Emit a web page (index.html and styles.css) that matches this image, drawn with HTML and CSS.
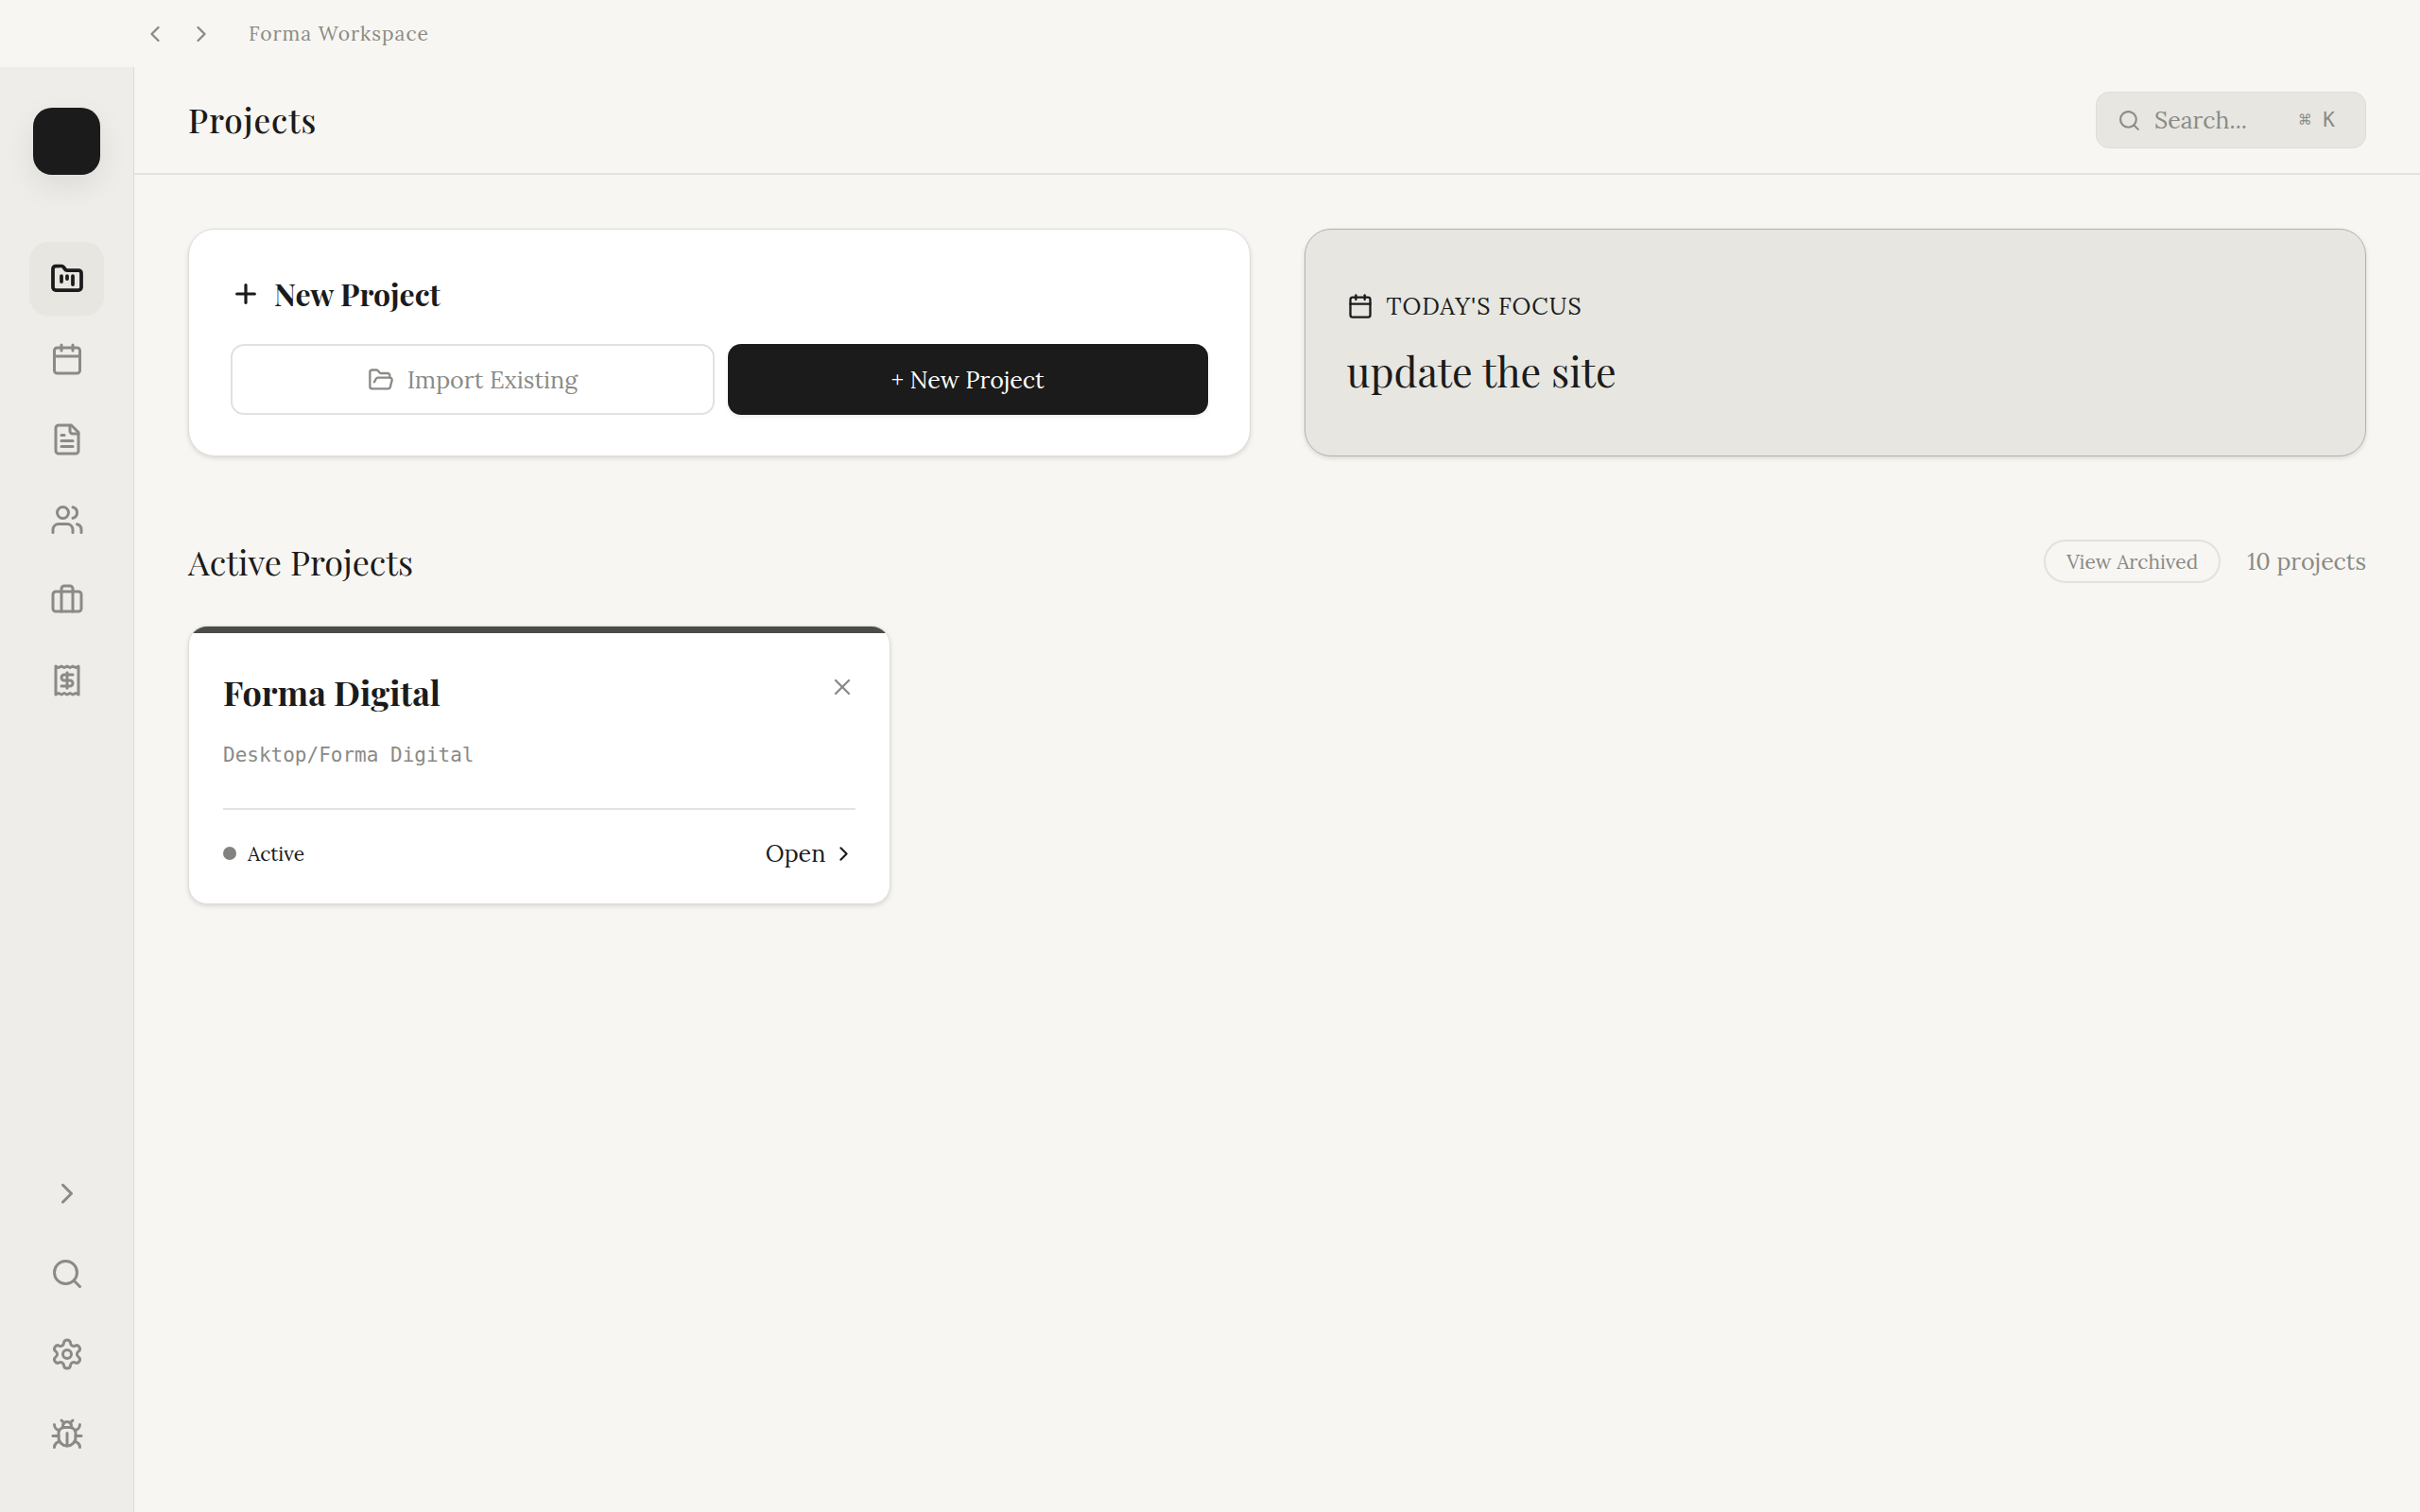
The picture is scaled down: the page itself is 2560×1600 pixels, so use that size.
FILE: index.html
```html
<!DOCTYPE html>
<html lang="en">
<head>
    <meta charset="UTF-8">
    <meta name="viewport" content="width=device-width, initial-scale=1.0">
    <title>Forma Workspace</title>
    <link rel="stylesheet" href="styles.css">
</head>
<body>

    <!-- Window bar -->
    <div class="topbar">
        <button class="history-btn" aria-label="Back">
            <svg class="icon icon-md" viewBox="0 0 24 24"><path d="m15 18-6-6 6-6"/></svg>
        </button>
        <button class="history-btn" aria-label="Forward">
            <svg class="icon icon-md" viewBox="0 0 24 24"><path d="m9 18 6-6-6-6"/></svg>
        </button>
        <span class="workspace-name">Forma Workspace</span>
    </div>

    <div class="app">
        <!-- Sidebar -->
        <aside class="sidebar">
            <div class="logo"></div>
            <nav class="nav">
                <a href="#projects" class="nav-item active" aria-label="Projects">
                    <svg class="icon icon-lg" viewBox="0 0 24 24"><path d="M4 20h16a2 2 0 0 0 2-2V8a2 2 0 0 0-2-2h-7.93a2 2 0 0 1-1.66-.9l-.82-1.2A2 2 0 0 0 7.93 3H4a2 2 0 0 0-2 2v13c0 1.1.9 2 2 2Z"/><path d="M8 10v4"/><path d="M12 10v2"/><path d="M16 10v6"/></svg>
                </a>
                <a href="#calendar" class="nav-item" aria-label="Calendar">
                    <svg class="icon icon-lg" viewBox="0 0 24 24"><path d="M8 2v4"/><path d="M16 2v4"/><rect width="18" height="18" x="3" y="4" rx="2"/><path d="M3 10h18"/></svg>
                </a>
                <a href="#documents" class="nav-item" aria-label="Documents">
                    <svg class="icon icon-lg" viewBox="0 0 24 24"><path d="M15 2H6a2 2 0 0 0-2 2v16a2 2 0 0 0 2 2h12a2 2 0 0 0 2-2V7Z"/><path d="M14 2v4a2 2 0 0 0 2 2h4"/><path d="M10 9H8"/><path d="M16 13H8"/><path d="M16 17H8"/></svg>
                </a>
                <a href="#clients" class="nav-item" aria-label="Clients">
                    <svg class="icon icon-lg" viewBox="0 0 24 24"><path d="M16 21v-2a4 4 0 0 0-4-4H6a4 4 0 0 0-4 4v2"/><circle cx="9" cy="7" r="4"/><path d="M22 21v-2a4 4 0 0 0-3-3.87"/><path d="M16 3.13a4 4 0 0 1 0 7.75"/></svg>
                </a>
                <a href="#portfolio" class="nav-item" aria-label="Portfolio">
                    <svg class="icon icon-lg" viewBox="0 0 24 24"><path d="M16 20V4a2 2 0 0 0-2-2h-4a2 2 0 0 0-2 2v16"/><rect width="20" height="14" x="2" y="6" rx="2"/></svg>
                </a>
                <a href="#invoices" class="nav-item" aria-label="Invoices">
                    <svg class="icon icon-lg" viewBox="0 0 24 24"><path d="M4 2v20l2-1 2 1 2-1 2 1 2-1 2 1 2-1 2 1V2l-2 1-2-1-2 1-2-1-2 1-2-1-2 1Z"/><path d="M16 8h-6a2 2 0 1 0 0 4h4a2 2 0 1 1 0 4H8"/><path d="M12 17.5v-11"/></svg>
                </a>
            </nav>
            <div class="nav nav-bottom">
                <button class="nav-item" aria-label="Expand sidebar">
                    <svg class="icon icon-lg" viewBox="0 0 24 24"><path d="m9 18 6-6-6-6"/></svg>
                </button>
                <button class="nav-item" aria-label="Search">
                    <svg class="icon icon-lg" viewBox="0 0 24 24"><circle cx="11" cy="11" r="8"/><path d="m21 21-4.3-4.3"/></svg>
                </button>
                <button class="nav-item" aria-label="Settings">
                    <svg class="icon icon-lg" viewBox="0 0 24 24"><path d="M9.671 4.136a2.34 2.34 0 0 1 4.659 0 2.34 2.34 0 0 0 3.319 1.915 2.34 2.34 0 0 1 2.33 4.033 2.34 2.34 0 0 0 0 3.831 2.34 2.34 0 0 1-2.33 4.033 2.34 2.34 0 0 0-3.319 1.915 2.34 2.34 0 0 1-4.659 0 2.34 2.34 0 0 0-3.32-1.915 2.34 2.34 0 0 1-2.33-4.033 2.34 2.34 0 0 0 0-3.831A2.34 2.34 0 0 1 6.35 6.051a2.34 2.34 0 0 0 3.319-1.915"/><circle cx="12" cy="12" r="3"/></svg>
                </button>
                <button class="nav-item" aria-label="Report a bug">
                    <svg class="icon icon-lg" viewBox="0 0 24 24"><path d="m8 2 1.88 1.88"/><path d="M14.12 3.88 16 2"/><path d="M9 7.13v-1a3.003 3.003 0 1 1 6 0v1"/><path d="M12 20c-3.3 0-6-2.7-6-6v-3a4 4 0 0 1 4-4h4a4 4 0 0 1 4 4v3c0 3.3-2.7 6-6 6"/><path d="M12 20v-9"/><path d="M6.53 9C4.6 8.8 3 7.1 3 5"/><path d="M6 13H2"/><path d="M3 21c0-2.1 1.7-3.9 3.8-4"/><path d="M20.97 5c0 2.1-1.6 3.8-3.5 4"/><path d="M22 13h-4"/><path d="M17.2 17c2.1.1 3.8 1.9 3.8 4"/></svg>
                </button>
            </div>
        </aside>

        <!-- Main area -->
        <main class="main">
            <header class="header">
                <h1>Projects</h1>
                <label class="search">
                    <svg class="icon icon-sm" viewBox="0 0 24 24"><circle cx="11" cy="11" r="8"/><path d="m21 21-4.3-4.3"/></svg>
                    <input type="text" placeholder="Search..." aria-label="Search">
                    <kbd>⌘ K</kbd>
                </label>
            </header>

            <div class="content">
                <div class="top-cards">
                    <!-- New project -->
                    <section class="card new-project">
                        <h2>
                            <svg class="icon icon-plus" viewBox="0 0 24 24"><path d="M5 12h14"/><path d="M12 5v14"/></svg>
                            New Project
                        </h2>
                        <div class="actions">
                            <button class="btn btn-outline">
                                <svg class="icon icon-md" viewBox="0 0 24 24"><path d="m6 14 1.45-2.9A2 2 0 0 1 9.24 10H20a2 2 0 0 1 1.94 2.5l-1.55 6a2 2 0 0 1-1.94 1.5H4a2 2 0 0 1-2-2V5c0-1.1.9-2 2-2h3.93a2 2 0 0 1 1.66.9l.82 1.2a2 2 0 0 0 1.66.9H18a2 2 0 0 1 2 2v2"/></svg>
                                Import Existing
                            </button>
                            <button class="btn btn-dark">+ New Project</button>
                        </div>
                    </section>

                    <!-- Focus of the day -->
                    <section class="card focus">
                        <div class="focus-label">
                            <svg class="icon icon-md" viewBox="0 0 24 24"><path d="M8 2v4"/><path d="M16 2v4"/><rect width="18" height="18" x="3" y="4" rx="2"/><path d="M3 10h18"/></svg>
                            TODAY'S FOCUS
                        </div>
                        <p class="focus-text">update the site</p>
                    </section>
                </div>

                <div class="section-head">
                    <h2>Active Projects</h2>
                    <button class="pill">View Archived</button>
                    <span class="count">10 projects</span>
                </div>

                <div class="project-grid">
                    <article class="project">
                        <div class="project-head">
                            <h3>Forma Digital</h3>
                            <button class="close" aria-label="Remove project">
                                <svg class="icon icon-md" viewBox="0 0 24 24"><path d="M18 6 6 18"/><path d="m6 6 12 12"/></svg>
                            </button>
                        </div>
                        <p class="path">Desktop/Forma Digital</p>
                        <div class="project-foot">
                            <span class="status"><span class="dot"></span>Active</span>
                            <a href="#open" class="open">
                                Open
                                <svg class="icon icon-sm" viewBox="0 0 24 24"><path d="m9 18 6-6-6-6"/></svg>
                            </a>
                        </div>
                    </article>
                </div>
            </div>
        </main>
    </div>

</body>
</html>
```
FILE: styles.css
```css
:root {
    --bg: #f7f6f2;
    --sidebar: #eeede9;
    --fill: #e7e6e1;
    --line: #dddcd8;
    --ink: #1b1b1b;
    --muted: #8a8a86;
    --display: "Playfair Display", "Liberation Serif", serif;
    --text: "Lora", "DejaVu Serif Condensed", serif;
    --mono: "DejaVu Sans Mono", monospace;
}

* {
    box-sizing: border-box;
    margin: 0;
    padding: 0;
}

body {
    display: flex;
    flex-direction: column;
    min-height: 100vh;
    background: var(--bg);
    color: var(--ink);
    font-family: var(--text);
    font-size: 25px;
}

button {
    border: none;
    background: none;
    color: inherit;
    font: inherit;
    cursor: pointer;
}

a {
    color: inherit;
    text-decoration: none;
}

/* Icons */
.icon {
    display: block;
    flex-shrink: 0;
    fill: none;
    stroke: currentColor;
    stroke-width: 2;
    stroke-linecap: round;
    stroke-linejoin: round;
}

.icon-sm { width: 25px; height: 25px; }
.icon-md { width: 28px; height: 28px; }
.icon-lg { width: 36px; height: 36px; }
.icon-plus { width: 32px; height: 32px; stroke-width: 2.4; }

/* Window bar */
.topbar {
    display: flex;
    align-items: center;
    gap: 7px;
    height: 71px;
    padding-left: 143px;
    color: var(--muted);
}

.history-btn {
    display: grid;
    place-items: center;
    width: 42px;
    height: 42px;
}

.workspace-name {
    margin-left: 22px;
    font-size: 21px;
    letter-spacing: 1px;
}

.app {
    display: flex;
    flex: 1;
}

/* Sidebar */
.sidebar {
    display: flex;
    flex-direction: column;
    align-items: center;
    width: 142px;
    padding: 43px 0;
    background: var(--sidebar);
    border-right: 1px solid var(--line);
}

.logo {
    width: 71px;
    height: 71px;
    margin-bottom: 71px;
    background: var(--ink);
    border-radius: 20px;
    box-shadow: 0 12px 32px rgba(0, 0, 0, 0.08);
}

.nav {
    display: flex;
    flex-direction: column;
    gap: 7px;
}

.nav-bottom {
    margin-top: auto;
}

.nav-item {
    display: grid;
    place-items: center;
    width: 79px;
    height: 78px;
    border-radius: 20px;
    color: var(--muted);
}

.nav-item.active {
    background: var(--fill);
    color: var(--ink);
}

.nav-item.active .icon {
    stroke-width: 2.5;
}

/* Header */
.main {
    flex: 1;
}

.header {
    display: flex;
    align-items: center;
    justify-content: space-between;
    padding: 26px 57px;
    border-bottom: 2px solid #e4e3df;
}

h1 {
    font-family: var(--display);
    font-size: 35px;
    font-weight: 500;
    line-height: 60px;
    letter-spacing: 1px;
}

.search {
    display: flex;
    align-items: center;
    width: 286px;
    height: 60px;
    padding: 0 32px 0 22px;
    background: var(--fill);
    border: 1px solid var(--line);
    border-radius: 14px;
    color: var(--muted);
}

.search input {
    flex: 1;
    min-width: 0;
    margin-left: 14px;
    border: none;
    outline: none;
    background: none;
    color: var(--ink);
    font: inherit;
}

.search input::placeholder {
    color: var(--muted);
    opacity: 1;
}

.search kbd {
    font-family: var(--mono);
    font-size: 21px;
}

/* Top cards */
.content {
    padding: 57px;
}

.top-cards {
    display: grid;
    grid-template-columns: 1fr 1fr;
    gap: 57px;
}

.card {
    padding: 43px 44px;
    border: 1px solid var(--line);
    border-radius: 28px;
    box-shadow: 0 2px 5px rgba(0, 0, 0, 0.12);
}

.new-project {
    background: #fff;
}

.new-project h2 {
    display: flex;
    align-items: center;
    gap: 14px;
    margin-bottom: 28px;
    font-family: var(--display);
    font-size: 32px;
    font-weight: 700;
    line-height: 50px;
}

.actions {
    display: flex;
    gap: 14px;
}

.btn {
    display: flex;
    flex: 1;
    align-items: center;
    justify-content: center;
    gap: 14px;
    height: 75px;
    border-radius: 14px;
}

.btn-outline {
    border: 2px solid #e2e1dd;
    color: var(--muted);
}

.btn-dark {
    background: var(--ink);
    color: #fff;
    box-shadow: 0 2px 4px rgba(0, 0, 0, 0.08);
}

.focus {
    display: flex;
    flex-direction: column;
    justify-content: center;
    gap: 26px;
    background: var(--fill);
    border-color: #b3b2ae;
}

.focus-label {
    display: flex;
    align-items: center;
    gap: 14px;
    letter-spacing: 1px;
}

.focus-text {
    font-family: var(--display);
    font-size: 43px;
    line-height: 52px;
}

/* Active projects */
.section-head {
    display: flex;
    align-items: center;
    gap: 28px;
    margin: 88px 0 45px;
}

.section-head h2 {
    margin-right: auto;
    font-family: var(--display);
    font-size: 36px;
    font-weight: 400;
    line-height: 46px;
}

.pill {
    height: 46px;
    padding: 0 22px;
    border: 2px solid #e2e1dd;
    border-radius: 23px;
    color: var(--muted);
    font-size: 21px;
}

.count {
    color: var(--muted);
}

.project-grid {
    display: grid;
    grid-template-columns: repeat(3, 1fr);
    gap: 37px;
}

.project {
    overflow: hidden;
    padding: 0 36px 35px;
    background: #fff;
    border: 1px solid var(--line);
    border-radius: 20px;
    box-shadow: 0 2px 5px rgba(0, 0, 0, 0.12);
}

/* Coloured strip along the top edge */
.project::before {
    content: "";
    display: block;
    height: 7px;
    margin: 0 -36px 36px;
    background: #4b4b49;
}

.project-head {
    display: flex;
    align-items: flex-start;
    justify-content: space-between;
}

.project h3 {
    font-family: var(--display);
    font-size: 36px;
    font-weight: 700;
    line-height: 52px;
}

.close {
    padding: 7px 0;
    color: var(--muted);
}

.path {
    margin: 26px 0 41px;
    color: var(--muted);
    font-family: var(--mono);
    font-size: 21px;
    line-height: 30px;
}

.project-foot {
    display: flex;
    align-items: center;
    justify-content: space-between;
    padding-top: 28px;
    border-top: 2px solid #e4e3df;
}

.status {
    display: flex;
    align-items: center;
    gap: 12px;
    font-size: 21px;
}

.dot {
    width: 14px;
    height: 14px;
    border-radius: 50%;
    background: #82827f;
}

.open {
    display: flex;
    align-items: center;
    gap: 7px;
    line-height: 36px;
}
```
